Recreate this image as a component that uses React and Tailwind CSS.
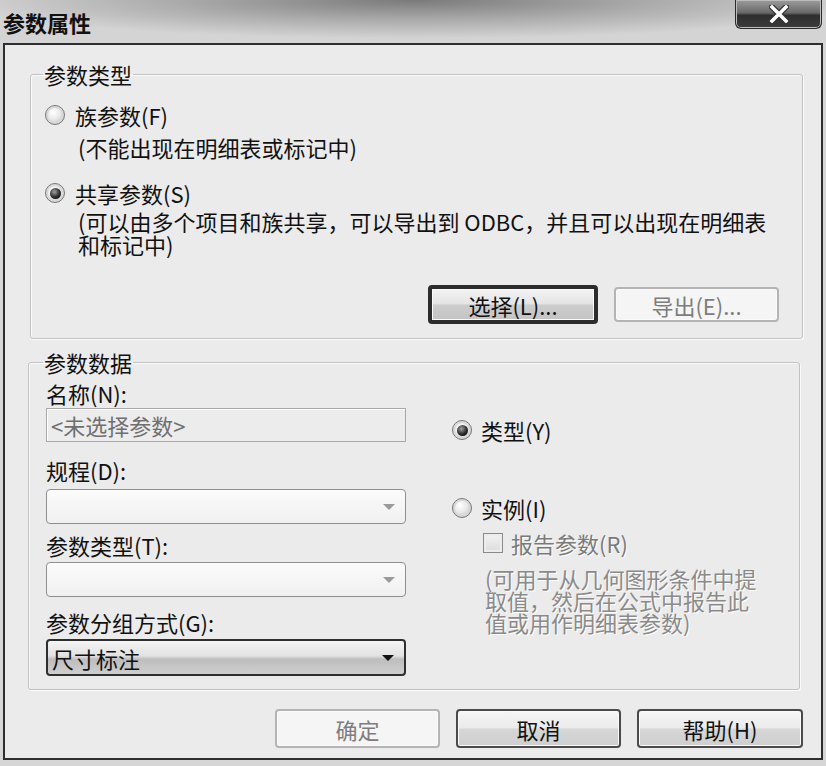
import React from 'react';

// radio bullet, Win7 grey style
const Radio = ({ checked }) => (
  <span className="w-[20px] h-[20px] rounded-full border border-[#777] bg-[radial-gradient(circle_at_40%_35%,#ffffff_0%,#e8e8e8_45%,#b0b0b0_100%)] flex items-center justify-center shrink-0 shadow-[inset_0_0_0_2px_#d8d8d8]">
    {checked && (
      <span className="w-[11px] h-[11px] rounded-full bg-[radial-gradient(circle_at_40%_35%,#a0a0a0_0%,#2a2a2a_55%,#000_100%)]" />
    )}
  </span>
);

const Arrow = ({ dark }) => (
  <svg width="14" height="8" viewBox="0 0 14 8" className="shrink-0">
    <path d="M1 1h12L7 7z" fill={dark ? '#111' : '#9a9a9a'} />
  </svg>
);

const Combo = ({ value, dark }) => (
  <div
    className={`h-[35px] w-[360px] rounded-[4px] border flex items-center justify-between pl-[4px] pr-[9px] ${
      dark
        ? 'h-[37px] border-2 border-[#2f2f2f] bg-[linear-gradient(#f4f4f4_0%,#e2e2e2_45%,#bdbdbd_55%,#cfcfcf_100%)]'
        : 'border-[#8f8f8f] bg-[linear-gradient(#fbfbfb,#f0f0f0)]'
    }`}
  >
    <span className="text-[22px] leading-[24px] text-[#111]">{value}</span>
    <Arrow dark={dark} />
  </div>
);

const Button = ({ children, variant = 'normal', className = '' }) => {
  const styles = {
    normal: 'h-[39px] border-2 border-[#4a4a4a] text-[#111] bg-[linear-gradient(#f6f6f6_0%,#ebebeb_48%,#d6d6d6_52%,#cfcfcf_100%)]',
    focus: 'h-[39px] border-[4px] border-[#2c2c2c] text-[#111] bg-[linear-gradient(#f3f3f3_0%,#e4e4e4_48%,#cccccc_52%,#c4c4c4_100%)]',
    disabled: 'h-[35px] border-2 border-[#b4b4b4] text-[#7d7d7d] bg-[#f5f5f5]',
  };
  return (
    <div
      className={`rounded-[4px] flex items-center justify-center text-[22px] leading-[24px] shadow-[inset_0_0_0_1px_#fafafa] ${styles[variant]} ${className}`}
    >
      {children}
    </div>
  );
};

const Label = ({ children, className = '' }) => (
  <div className={`text-[22px] leading-[24px] text-[#111] ${className}`}>{children}</div>
);

export default function App() {
  return (
    <div className="w-[826px] h-[766px] bg-[#d6d6d6] flex flex-col overflow-hidden font-[family-name:'Noto_Sans_CJK_SC','Noto_Sans',sans-serif]">
      {/* Title bar */}
      <div className="relative h-[43px] shrink-0 bg-[radial-gradient(ellipse_55%_90%_at_50%_0%,#7a7a7a_0%,#a9a9a9_50%,#d4d4d4_100%)] flex items-center pl-[3px]">
        <span className="text-[22px] leading-[24px] font-bold text-[#111]">参数属性</span>
        <div className="absolute top-0 right-[4px] w-[87px] h-[29px] rounded-b-[6px] border border-[#2a2a2a] border-t-0 bg-[linear-gradient(#9c9c9c_0%,#6a6a6a_45%,#2e2e2e_55%,#3c3c3c_100%)] flex items-center justify-center shadow-[inset_0_0_0_1px_#bdbdbd]">
          <svg width="20" height="18" viewBox="0 0 20 18">
            <path d="M3 2l14 14M17 2L3 16" stroke="#333" strokeWidth="6" strokeLinecap="square" />
            <path d="M3 2l14 14M17 2L3 16" stroke="#fff" strokeWidth="3.5" strokeLinecap="square" />
          </svg>
        </div>
      </div>

      {/* Dialog frame */}
      <div className="ml-[3px] w-[820px] h-[717px] shrink-0 border-2 border-[#2e2e2e] bg-[#ebebeb] flex flex-col">
        {/* 参数类型 */}
        <fieldset className="ml-[25px] mt-[17px] w-[773px] h-[277px] border border-[#c2c2c2] rounded-[3px] shadow-[inset_1px_1px_0_#fbfbfb,1px_1px_0_#fbfbfb]">
          <legend className="ml-[12px] px-[1px] text-[22px] leading-[24px] text-[#111]">参数类型</legend>
          <div className="pl-[14px] pr-[23px] flex flex-col">
            <div className="mt-[17px] flex items-center gap-[10px]">
              <Radio />
              <Label>族参数(F)</Label>
            </div>
            <Label className="mt-[8px] pl-[33px]">(不能出现在明细表或标记中)</Label>
            <div className="mt-[22px] flex items-center gap-[10px]">
              <Radio checked />
              <Label>共享参数(S)</Label>
            </div>
            <div className="mt-[5px] pl-[33px] text-[22px] leading-[23px] text-[#111]">
              <div>(可以由多个项目和族共享，可以导出到 ODBC，并且可以出现在明细表</div>
              <div>和标记中)</div>
            </div>
            <div className="mt-[29px] flex justify-end items-center gap-[16px]">
              <Button variant="focus" className="w-[170px]">选择(L)...</Button>
              <Button variant="disabled" className="w-[165px]">导出(E)...</Button>
            </div>
          </div>
        </fieldset>

        {/* 参数数据 */}
        <fieldset className="ml-[23px] mt-[11px] w-[772px] h-[340px] border border-[#c2c2c2] rounded-[3px] shadow-[inset_1px_1px_0_#fbfbfb,1px_1px_0_#fbfbfb]">
          <legend className="ml-[14px] px-[1px] text-[22px] leading-[24px] text-[#111]">参数数据</legend>
          <div className="pl-[17px] flex">
            <div className="w-[360px] flex flex-col">
              <Label className="mt-[7px]">名称(N):</Label>
              <div className="mt-[3px] h-[34px] border border-[#a8a8a8] bg-[#ececec] shadow-[inset_1px_1px_0_#fff] flex items-center pl-[4px] text-[22px] leading-[24px] text-[#6f6f6f]">
                &lt;未选择参数&gt;
              </div>
              <Label className="mt-[16px]">规程(D):</Label>
              <div className="mt-[7px]">
                <Combo value="" />
              </div>
              <Label className="mt-[9px]">参数类型(T):</Label>
              <div className="mt-[5px]">
                <Combo value="" />
              </div>
              <Label className="mt-[13px]">参数分组方式(G):</Label>
              <div className="mt-[5px]">
                <Combo value="尺寸标注" dark />
              </div>
            </div>

            <div className="ml-[46px] flex flex-col">
              <div className="mt-[44px] flex items-center gap-[9px]">
                <Radio checked />
                <Label>类型(Y)</Label>
              </div>
              <div className="mt-[54px] flex items-center gap-[9px]">
                <Radio />
                <Label>实例(I)</Label>
              </div>
              <div className="mt-[11px] pl-[31px] flex items-center gap-[8px]">
                <span className="w-[20px] h-[20px] border border-[#8a8a8a] bg-[linear-gradient(#f2f2f2,#dcdcdc)] shadow-[inset_0_0_0_2px_#ececec]" />
                <span className="text-[22px] leading-[24px] text-[#7a7a7a] [text-shadow:1px_1px_0_#fff]">报告参数(R)</span>
              </div>
              <div className="mt-[12px] pl-[33px] text-[22px] leading-[22px] text-[#8a8a8a] [text-shadow:1px_1px_0_#fff]">
                <div>(可用于从几何图形条件中提</div>
                <div>取值，然后在公式中报告此</div>
                <div>值或用作明细表参数)</div>
              </div>
            </div>
          </div>
        </fieldset>

        {/* bottom buttons */}
        <div className="mt-[19px] pr-[18px] flex justify-end items-center gap-[16px]">
          <Button variant="disabled" className="w-[165px] h-[39px]">确定</Button>
          <Button className="w-[165px]">取消</Button>
          <Button className="w-[166px]">帮助(H)</Button>
        </div>
      </div>
    </div>
  );
}
